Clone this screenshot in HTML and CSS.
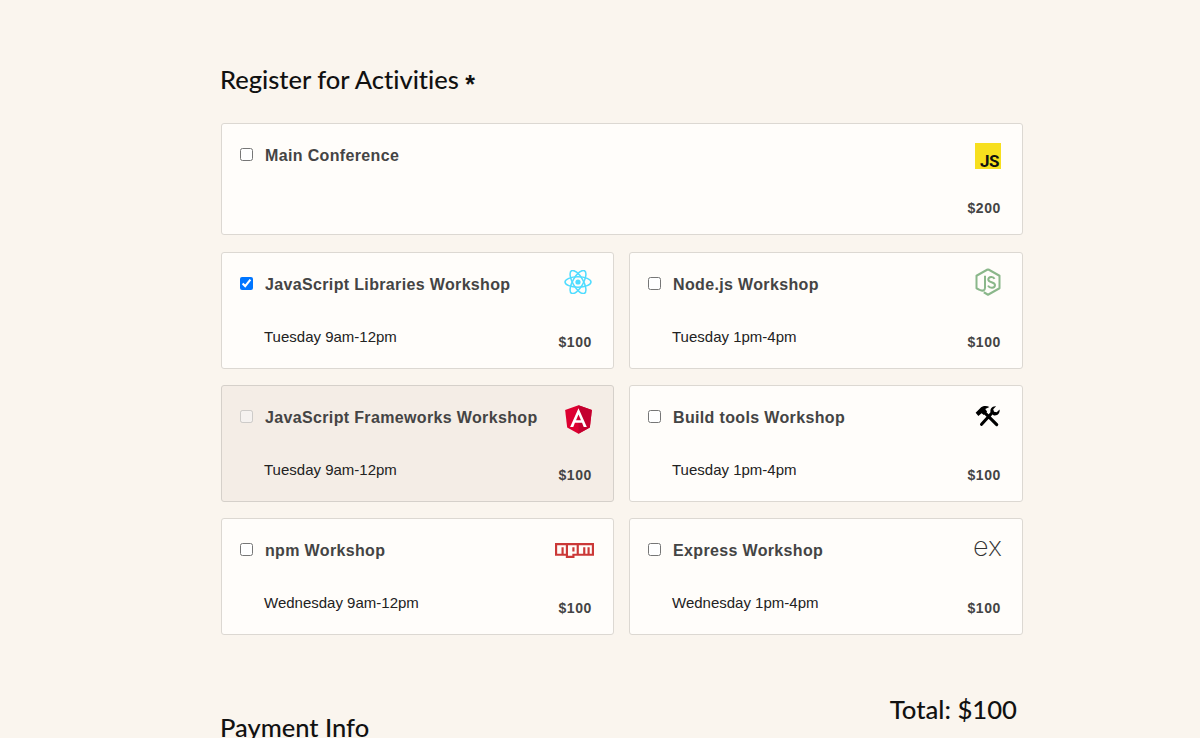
FILE: index.html
```html
<!DOCTYPE html>
<html lang="en">
<head>
<meta charset="utf-8">
<title>Register for Activities</title>
<link rel="stylesheet" href="styles.css">
</head>
<body>
<main class="page">
  <h2 class="heading">Register for Activities <span class="req">*</span></h2>
  <div class="grid">
    <label class="card card-wide">
      <span class="top">
        <input type="checkbox">
        <span class="name">Main Conference</span>
        <span class="logo logo-js">JS</span>
      </span>
      <span class="bottom"><span class="when"></span><span class="price">$200</span></span>
    </label>

    <label class="card">
      <span class="top">
        <input type="checkbox" checked>
        <span class="name">JavaScript Libraries Workshop</span>
        <svg class="logo logo-react" width="28" height="24" viewBox="0 0 28 24" fill="none" stroke="#4fdcff" stroke-width="1.500">
          <ellipse cx="14" cy="12" rx="13" ry="5.200"/>
          <ellipse cx="14" cy="12" rx="13" ry="5.200" transform="rotate(60 14 12)"/>
          <ellipse cx="14" cy="12" rx="13" ry="5.200" transform="rotate(120 14 12)"/>
          <circle cx="14" cy="12" r="2.600" fill="#4fdcff" stroke="none"/>
        </svg>
      </span>
      <span class="bottom"><span class="when">Tuesday 9am-12pm</span><span class="price">$100</span></span>
    </label>

    <label class="card">
      <span class="top">
        <input type="checkbox">
        <span class="name">Node.js Workshop</span>
        <svg class="logo logo-node" width="26" height="28" viewBox="0 0 26 27" fill="none" stroke="#8ab78a" stroke-width="2" stroke-linejoin="round" preserveAspectRatio="none">
          <path d="M13 1.200 24.500 7.500V19.500L13 25.800 8.800 23.400M5 21.300 1.500 19.500V7.500L13 1.200"/>
          <path d="M10 7.500V19C10 22 7.500 22.500 5 21"/>
          <path d="M19.500 10.500C18.500 8 13.500 8 13.300 11 13.300 14.500 20 12.800 20 16.500 20 19.800 14.500 19.800 13 17"/>
        </svg>
      </span>
      <span class="bottom"><span class="when">Tuesday 1pm-4pm</span><span class="price">$100</span></span>
    </label>

    <label class="card card-off">
      <span class="top">
        <input type="checkbox" disabled>
        <span class="name">JavaScript Frameworks Workshop</span>
        <svg class="logo" width="27" height="29" viewBox="31 30 188 200">
          <path fill="#dd0031" d="M125 30 31.900 63.200 46.100 186.300 125 230 203.900 186.300 218.100 63.200z"/>
          <path fill="#c3002f" d="M125 30V230L203.900 186.300 218.100 63.200z"/>
          <path fill="#fff" d="M125 52.100 66.800 182.600H88.500L100.200 153.400H149.600L161.300 182.600H183L125 52.100zM142 135.400H108L125 94.500z"/>
        </svg>
      </span>
      <span class="bottom"><span class="when">Tuesday 9am-12pm</span><span class="price">$100</span></span>
    </label>

    <label class="card">
      <span class="top">
        <input type="checkbox">
        <span class="name">Build tools Workshop</span>
        <svg class="logo" width="26" height="22" viewBox="0 0 28 24">
          <path fill="none" stroke="#000" stroke-width="3.400" stroke-linecap="round" d="M9.500 7.500 23.500 21.500M18 9 7 21"/>
          <path fill="#000" d="M.5 8.500 6.500 2.500C9 .5 13 .5 15.500 2.200L11 4.300 13 7 9.500 11 7 9 3.500 12z"/>
          <path fill="#000" d="M17 8.500C15.500 4.500 18.500.8 22.800 1.300L19.700 4.500 20.600 7.300 23.500 8 26.600 4.900C27.400 9 24 12.400 20 11.200z"/>
        </svg>
      </span>
      <span class="bottom"><span class="when">Tuesday 1pm-4pm</span><span class="price">$100</span></span>
    </label>

    <label class="card">
      <span class="top">
        <input type="checkbox">
        <span class="name">npm Workshop</span>
        <svg class="logo logo-npm" width="39" height="15" viewBox="0 0 18 7" preserveAspectRatio="none">
          <path fill="#cb3837" d="M0 0h18v6H9v1H5V6H0V0zM1 5h2V2h1v3h1V1H1V5zM6 1v5h2V5h2V1H6zM8 2h1v2H8V2zM11 1v4h2V2h1v3h1V2h1v3h1V1H11z"/>
        </svg>
      </span>
      <span class="bottom"><span class="when">Wednesday 9am-12pm</span><span class="price">$100</span></span>
    </label>

    <label class="card">
      <span class="top">
        <input type="checkbox">
        <span class="name">Express Workshop</span>
        <span class="logo logo-ex">ex</span>
      </span>
      <span class="bottom"><span class="when">Wednesday 1pm-4pm</span><span class="price">$100</span></span>
    </label>
  </div>
  <div class="foot">
    <h2 class="heading heading-pay">Payment Info</h2>
    <p class="total">Total: $100</p>
  </div>
</main>
</body>
</html>
```
FILE: styles.css
```css
html, body {
  margin: 0;
  height: 738px;
  overflow: hidden;
  background: #faf5ee;
}
.page {
  width: 804px;
  margin: 0 0 0 220px;
  padding-top: 64px;
  color: #000;
  font-family: "Liberation Sans", Arial, sans-serif;
}
.heading {
  margin: 0;
  font: 500 25.500px/30px Lato, sans-serif;
  font-variant-ligatures: none;
  color: #111;
}
.req {
  font-family: "Liberation Sans", Arial, sans-serif;
  font-size: 25px;
  font-weight: 700;
  vertical-align: -4px;
  line-height: 0;
}
.grid {
  display: grid;
  grid-template-columns: 393px 394px;
  gap: 16px 15px;
  width: 802px;
  margin: 29px 0 0 1px;
}
.card {
  display: flex;
  flex-direction: column;
  justify-content: space-between;
  box-sizing: border-box;
  height: 117px;
  padding: 19px 21px 17px 18px;
  background: #fffdfa;
  border: 1px solid #dcd8d2;
  border-radius: 3px;
}
.card-wide {
  grid-column: 1 / -1;
  height: 112px;
  margin-bottom: 1px;
}
.card-off {
  background: #f4ede6;
  border-color: #d5d0ca;
}
.top {
  display: flex;
  align-items: flex-start;
}
.top input {
  flex: none;
  margin: 5px 12px 0 0;
  width: 13px;
  height: 13px;
}
.name {
  flex: 1;
  font-size: 16px;
  line-height: 26px;
  font-weight: 700;
  letter-spacing: .35px;
  color: #444;
}
.logo {
  flex: none;
  display: block;
}
.logo-js {
  box-sizing: border-box;
  width: 26px;
  height: 26px;
  padding: 10px 2px 0 0;
  background: #f7df1e;
  color: #111;
  font: 700 17px/16px Roboto, sans-serif;
  letter-spacing: -.5px;
  text-align: right;
}
.logo-react {
  margin-top: -2px;
}
.logo-node {
  margin-top: -4px;
}
.logo-npm {
  margin: 5px -2px 0 0;
}
.logo-ex {
  width: 28px;
  height: 26px;
  margin-top: -2px;
  font: 200 27px/22px Inter, sans-serif;
  color: #333;
}
.bottom {
  display: flex;
  justify-content: space-between;
  align-items: flex-end;
}
.when {
  margin-left: 24px;
  margin-bottom: 5px;
  font-size: 15px;
  line-height: 18px;
  color: #222;
}
.price {
  font-size: 14px;
  line-height: 18px;
  font-weight: 700;
  letter-spacing: .6px;
  color: #444;
}
.foot {
  display: flex;
  justify-content: space-between;
  align-items: flex-start;
  width: 797px;
  margin-top: 59px;
}
.heading-pay {
  margin-top: 18px;
}
.total {
  margin: 0;
  font: 500 25.700px/30px Lato, sans-serif;
  color: #111;
}
```
